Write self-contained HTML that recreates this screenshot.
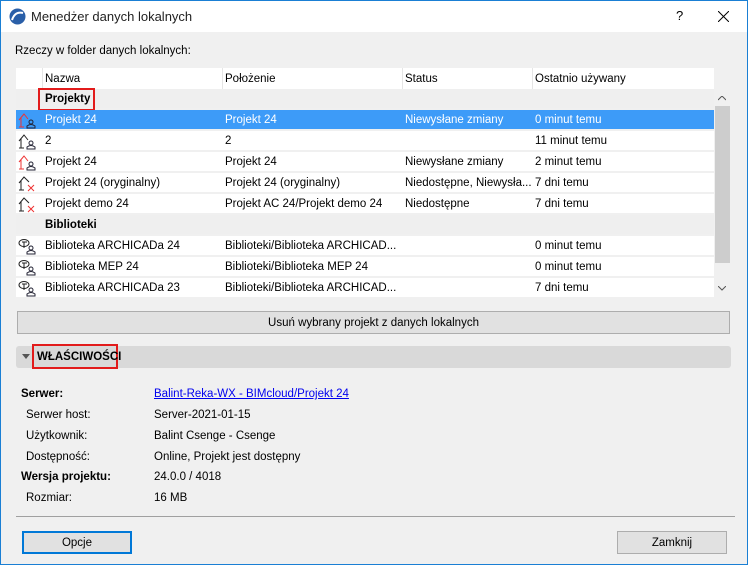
<!DOCTYPE html>
<html><head><meta charset="utf-8"><style>
*{margin:0;padding:0;box-sizing:border-box}
body{width:748px;height:565px;overflow:hidden;font-family:"Liberation Sans",sans-serif;font-size:11.5px;color:#000;background:#f0f0f0;position:relative}
.win{position:absolute;left:0;top:0;width:748px;height:565px;border:1px solid #1a7fd4;background:#f0f0f0}
.title{position:absolute;left:0;top:0;width:746px;height:31px;background:#fff}
.a{position:absolute;white-space:nowrap}
.row{position:absolute;left:15px;width:698px;height:20px;background:#fff;border-bottom:1px solid #f0f0f0}
.row span{position:absolute;top:4px;white-space:nowrap}
.grp{background:#efefef}
.sel{background:#3d9bf8;color:#fff}
.c1{left:29px}.c2{left:209px}.c3{left:389px}.c4{left:519px}
.ic{position:absolute;left:1px;top:1px}
.btn{position:absolute;background:#e1e1e1;border:1px solid #adadad;display:flex;align-items:center;justify-content:center}
</style></head><body>
<div class="win">
<div class="title">
<svg class="a" style="left:8px;top:7px" width="17" height="17" viewBox="0 0 17 17"><circle cx="8.5" cy="8.5" r="8" fill="#2a5fa8"/><path d="M3 12 Q6 3 14 5" stroke="#fff" stroke-width="2" fill="none"/></svg>
<div class="a" style="left:30px;top:8px;font-size:13px;color:#222">Menedżer danych lokalnych</div>
<div class="a" style="left:675px;top:7px;font-size:13px">?</div>
<svg class="a" style="left:717px;top:10px" width="11" height="11"><path d="M0 0L11 11M11 0L0 11" stroke="#000" stroke-width="1"/></svg>
</div>
<div class="a" style="left:14px;top:44px">Rzeczy w folder danych lokalnych:</div>
<div class="a" style="left:15px;top:67px;width:698px;height:21px;background:#fff"></div>
<div class="a" style="left:41px;top:67px;width:1px;height:21px;background:#e5e5e5"></div>
<div class="a" style="left:221px;top:67px;width:1px;height:21px;background:#e5e5e5"></div>
<div class="a" style="left:401px;top:67px;width:1px;height:21px;background:#e5e5e5"></div>
<div class="a" style="left:531px;top:67px;width:1px;height:21px;background:#e5e5e5"></div>
<div class="a" style="left:44px;top:72px">Nazwa</div>
<div class="a" style="left:224px;top:72px">Położenie</div>
<div class="a" style="left:404px;top:72px">Status</div>
<div class="a" style="left:534px;top:72px">Ostatnio używany</div>

<div class="row grp" style="top:88px"><span class="c1" style="font-weight:bold">Projekty</span></div>
<div class="a" style="left:37px;top:87px;width:57px;height:23px;border:2px solid #e21b1b"></div>
<div class="row sel" style="top:109px"><svg class="ic" width="20" height="18"><path d="M2 9L7 3L11 8M4 7V16M2 16H7" stroke="#e33" fill="none"/><circle cx="14" cy="11" r="2" stroke="#223" fill="none"/><path d="M10 17V15Q14 12 18 15V17Z" stroke="#223" fill="none"/></svg><span class="c1">Projekt 24</span><span class="c2">Projekt 24</span><span class="c3">Niewysłane zmiany</span><span class="c4">0 minut temu</span></div>
<div class="row" style="top:130px"><svg class="ic" width="20" height="18"><path d="M2 9L7 3L11 8M4 7V16M2 16H7" stroke="#222" fill="none"/><circle cx="14" cy="11" r="2" stroke="#223" fill="none"/><path d="M10 17V15Q14 12 18 15V17Z" stroke="#223" fill="none"/></svg><span class="c1">2</span><span class="c2">2</span><span class="c4">11 minut temu</span></div>
<div class="row" style="top:151px"><svg class="ic" width="20" height="18"><path d="M2 9L7 3L11 8M4 7V16M2 16H7" stroke="#e33" fill="none"/><circle cx="14" cy="11" r="2" stroke="#223" fill="none"/><path d="M10 17V15Q14 12 18 15V17Z" stroke="#223" fill="none"/></svg><span class="c1">Projekt 24</span><span class="c2">Projekt 24</span><span class="c3">Niewysłane zmiany</span><span class="c4">2 minut temu</span></div>
<div class="row" style="top:172px"><svg class="ic" width="20" height="18"><path d="M2 9L7 3L12 8M4 7V16M2 16H7" stroke="#222" fill="none"/><path d="M11 11L17 17M17 11L11 17" stroke="#e33"/></svg><span class="c1">Projekt 24 (oryginalny)</span><span class="c2">Projekt 24 (oryginalny)</span><span class="c3">Niedostępne, Niewysła...</span><span class="c4">7 dni temu</span></div>
<div class="row" style="top:193px"><svg class="ic" width="20" height="18"><path d="M2 9L7 3L12 8M4 7V16M2 16H7" stroke="#222" fill="none"/><path d="M11 11L17 17M17 11L11 17" stroke="#e33"/></svg><span class="c1">Projekt demo 24</span><span class="c2">Projekt AC 24/Projekt demo 24</span><span class="c3">Niedostępne</span><span class="c4">7 dni temu</span></div>
<div class="row grp" style="top:214px"><span class="c1" style="font-weight:bold">Biblioteki</span></div>
<div class="row" style="top:235px"><svg class="ic" width="20" height="18"><ellipse cx="7" cy="6" rx="5" ry="3.5" stroke="#222" fill="none"/><path d="M5 5H10M7 5V11" stroke="#222"/><circle cx="14" cy="11" r="2" stroke="#223" fill="none"/><path d="M10 17V15Q14 12 18 15V17Z" stroke="#223" fill="none"/></svg><span class="c1">Biblioteka ARCHICADa 24</span><span class="c2">Biblioteki/Biblioteka ARCHICAD...</span><span class="c4">0 minut temu</span></div>
<div class="row" style="top:256px"><svg class="ic" width="20" height="18"><ellipse cx="7" cy="6" rx="5" ry="3.5" stroke="#222" fill="none"/><path d="M5 5H10M7 5V11" stroke="#222"/><circle cx="14" cy="11" r="2" stroke="#223" fill="none"/><path d="M10 17V15Q14 12 18 15V17Z" stroke="#223" fill="none"/></svg><span class="c1">Biblioteka MEP 24</span><span class="c2">Biblioteki/Biblioteka MEP 24</span><span class="c4">0 minut temu</span></div>
<div class="row" style="top:277px"><svg class="ic" width="20" height="18"><ellipse cx="7" cy="6" rx="5" ry="3.5" stroke="#222" fill="none"/><path d="M5 5H10M7 5V11" stroke="#222"/><circle cx="14" cy="11" r="2" stroke="#223" fill="none"/><path d="M10 17V15Q14 12 18 15V17Z" stroke="#223" fill="none"/></svg><span class="c1">Biblioteka ARCHICADa 23</span><span class="c2">Biblioteki/Biblioteka ARCHICAD...</span><span class="c4">7 dni temu</span></div>
<div class="a" style="left:713px;top:88px;width:16px;height:208px;background:#f0f0f0"></div>
<div class="a" style="left:714px;top:105px;width:15px;height:157px;background:#cdcdcd"></div>
<svg class="a" style="left:717px;top:95px" width="8" height="5"><path d="M0 4L4 0L8 4" stroke="#555" fill="none"/></svg>
<svg class="a" style="left:717px;top:285px" width="8" height="5"><path d="M0 0L4 4L8 0" stroke="#555" fill="none"/></svg>

<div class="btn" style="left:16px;top:310px;width:713px;height:23px">Usuń wybrany projekt z danych lokalnych</div>
<div class="a" style="left:15px;top:345px;width:715px;height:22px;background:#d9d9d9;border-radius:3px"></div>
<svg class="a" style="left:21px;top:353px" width="9" height="6"><path d="M0 0H8L4 5Z" fill="#555"/></svg>
<div class="a" style="left:31px;top:343px;width:86px;height:25px;border:2px solid #e21b1b"></div>
<div class="a" style="left:36px;top:350px;font-weight:bold">WŁAŚCIWOŚCI</div>

<div class="a" style="left:20px;top:387px;font-weight:bold">Serwer:</div>
<div class="a" style="left:153px;top:387px;color:#0000ee;text-decoration:underline">Balint-Reka-WX - BIMcloud/Projekt 24</div>
<div class="a" style="left:25px;top:408px">Serwer host:</div>
<div class="a" style="left:153px;top:408px">Server-2021-01-15</div>
<div class="a" style="left:25px;top:429px">Użytkownik:</div>
<div class="a" style="left:153px;top:429px">Balint Csenge - Csenge</div>
<div class="a" style="left:25px;top:450px">Dostępność:</div>
<div class="a" style="left:153px;top:450px">Online, Projekt jest dostępny</div>
<div class="a" style="left:20px;top:470px;font-weight:bold">Wersja projektu:</div>
<div class="a" style="left:153px;top:470px">24.0.0 / 4018</div>
<div class="a" style="left:25px;top:491px">Rozmiar:</div>
<div class="a" style="left:153px;top:491px">16 MB</div>
<div class="a" style="left:15px;top:515px;width:719px;height:1px;background:#a0a0a0"></div>
<div class="btn" style="left:21px;top:530px;width:110px;height:23px;border:2px solid #0078d7">Opcje</div>
<div class="btn" style="left:616px;top:530px;width:110px;height:23px">Zamknij</div>
</div>
</body></html>
